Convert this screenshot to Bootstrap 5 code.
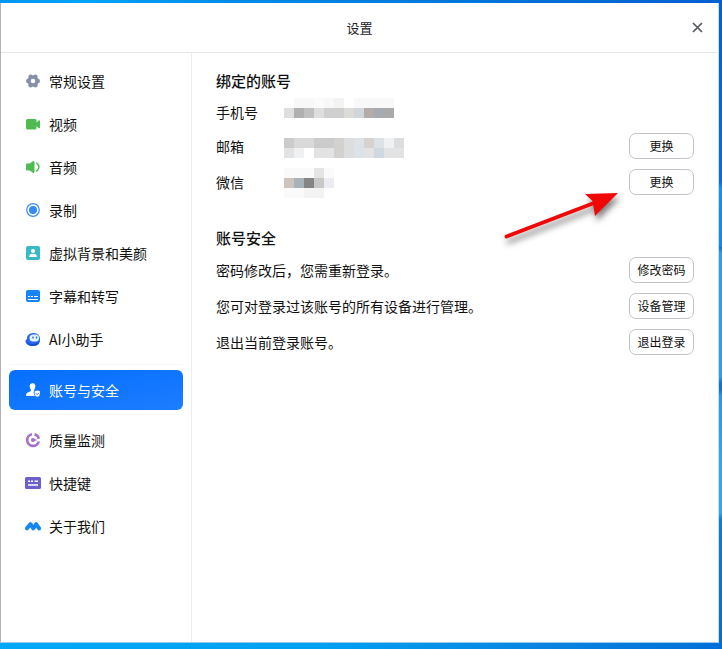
<!DOCTYPE html>
<html lang="zh-CN">
<head>
<meta charset="utf-8">
<meta name="viewport" content="width=device-width, initial-scale=1">
<title>设置</title>
<link href="https://cdn.jsdelivr.net/npm/bootstrap@5.3.0/dist/css/bootstrap.min.css" rel="stylesheet">
<style>
body {
  font-family: "Noto Sans CJK SC", sans-serif;
  font-size: 14px; line-height: 20px; color: #111;
  padding: 3px 3px 6px 0;
  background:
    linear-gradient(90deg, #0098f0 0, #00a4f6 12%, #008ee8 30%, #0078dc 60%, #0060cf 100%) top / 100% 3px no-repeat,
    linear-gradient(90deg, #00a8f8 0, #00a0f2 45%, #0a84e0 75%, #0070d8 100%) bottom / 100% 6px no-repeat,
    linear-gradient(180deg, #0360cf 0, #0a6ce0 28%, #1590f0 29%, #1488ea 38%, #0b6bcb 38%, #319fe8 39%, #319fe8 58%, #1173cd 59%, #1173cd 60%, #2a98e6 61%, #35a6ee 72%, #35a6ee 79%, #0f7dd0 80%, #0a6cc6 100%);
}
.window { border-left: 1px solid #b0b4b8; border-right: 1px solid #c4dff5; border-bottom: 1px solid #9cc8ea; }
.titlebar { height: 50px; border-bottom: 1px solid #e6e6e8; font-size: 13px; color: #222; }
.close-btn { position: absolute; right: 14px; top: 18px; line-height: 0; }
.sidebar { width: 191px; border-right: 1px solid #ededf0; padding: 6px 8px; }
.sidebar .nav-link { height: 43px; padding: 0 16px; color: #111; gap: 8px; font-size: 14px; border-radius: 6px; }
.sidebar .nav-link svg { width: 16px; height: 16px; flex: none; }
.sidebar .active-item { padding: 5px 0 4px; margin: 4px 0 3px; border-top: 1px solid #f8f8fa; border-bottom: 1px solid #f8f8fa; }
.sidebar .nav-link.active { height: 40px; color: #fff; background: linear-gradient(170deg, #066fff, #1c7dff); }
.pane { padding: 14px 24px 0; }
.pane h2 { font-size: 15px; font-weight: 500; line-height: 28px; margin: 0; }
.pane section + section { margin-top: 24px; }
.setting { height: 36px; }
.setting.compact { height: 33px; }
.setting dt { width: 68px; font-weight: 400; }
.setting dd, .setting p { margin: 0; }
.setting dd { line-height: 0; }
.setting .btn { width: 65px; height: 26px; padding: 0; font-size: 12px; line-height: 22px; border: 1px solid #bfc3cb; border-radius: 7px; color: #111; background: #fff; }
.pointer { position: absolute; right: 100px; top: 128px; pointer-events: none; filter: drop-shadow(2px 5px 3px rgba(0,0,0,.5)); }
</style>
<script src="https://cdn.jsdelivr.net/npm/bootstrap@5.3.0/dist/js/bootstrap.bundle.min.js"></script>
</head>
<body class="min-vh-100 d-flex flex-column">
<div class="window bg-white flex-grow-1 d-flex flex-column">
  <header class="titlebar position-relative d-flex align-items-center justify-content-center">
    <span>设置</span>
    <button type="button" class="close-btn btn p-0 border-0" aria-label="关闭">
      <svg width="13" height="13" viewBox="0 0 13 13" stroke="#55585c" stroke-width="1.7"><path d="M2 2l9 9M11 2l-9 9"/></svg>
    </button>
  </header>
  <div class="d-flex flex-grow-1">
    <nav class="sidebar flex-shrink-0" aria-label="设置分类">
      <ul class="nav flex-column">
        <li><a class="nav-link d-flex align-items-center" href="#general">
          <svg viewBox="0 0 16 16" fill="#8790ab"><circle cx="8" cy="8" r="4" fill="none" stroke="#8790ab" stroke-width="3.400"/><circle cx="12.800" cy="8" r="2.200"/><circle cx="3.200" cy="8" r="2.200"/><circle cx="10.400" cy="3.800" r="2.200"/><circle cx="5.600" cy="3.800" r="2.200"/><circle cx="10.400" cy="12.200" r="2.200"/><circle cx="5.600" cy="12.200" r="2.200"/></svg>
          常规设置</a></li>
        <li><a class="nav-link d-flex align-items-center" href="#video">
          <svg viewBox="0 0 16 16" fill="#50bb50"><rect x="1" y="3" width="10.500" height="10.500" rx="1.500"/><path d="M11 6.800L13.800 4.500Q15 3.800 15 5V11.500Q15 12.700 13.800 12L11 9.800Z"/></svg>
          视频</a></li>
        <li><a class="nav-link d-flex align-items-center" href="#audio">
          <svg viewBox="0 0 16 16" fill="#50bb50"><path d="M2 4.500H4.500L8 2.200Q9.500 1.500 9.500 3V13Q9.500 14.500 8 13.800L4.500 11.500H2Q1 11.500 1 10.500V5.500Q1 4.500 2 4.500Z"/><path d="M11.300 3.500Q16.500 8 11.300 12.500" fill="none" stroke="#50bb50" stroke-width="1.500"/></svg>
          音频</a></li>
        <li><a class="nav-link d-flex align-items-center" href="#record">
          <svg viewBox="0 0 16 16"><circle cx="8" cy="8" r="6.300" fill="none" stroke="#3d8bf2" stroke-width="1.200"/><circle cx="8" cy="8" r="4" fill="#338af3"/></svg>
          录制</a></li>
        <li><a class="nav-link d-flex align-items-center" href="#background">
          <svg viewBox="0 0 16 16"><rect x="1" y="1" width="14" height="14" rx="2" fill="#3bb8c6"/><g fill="#fff"><circle cx="8" cy="6" r="2.100"/><path d="M4 12Q4 8.800 8 8.800Q12 8.800 12 12Z"/></g></svg>
          虚拟背景和美颜</a></li>
        <li><a class="nav-link d-flex align-items-center" href="#captions">
          <svg viewBox="0 0 16 16"><rect x="1" y="2" width="14" height="12" rx="2" fill="#1684f5"/><path d="M3 8.500H5M6 8.500H8M9 8.500H13M3 11.500H13" stroke="#fff" stroke-width="1.200"/></svg>
          字幕和转写</a></li>
        <li><a class="nav-link d-flex align-items-center" href="#assistant">
          <svg viewBox="0 0 16 16"><path d="M2 6Q4 1.500 9 2Q14.500 2.500 15 7.500Q15.500 12 12 14Q7 16 3 14Q-.5 12 .8 9Q2.500 8.500 2 6Z" fill="#2b67ed"/><path d="M1 10Q3 13 8 13Q12 13 14.500 10Q14.500 15 8 15Q2 15 1 10Z" fill="#164fd2"/><rect x="4.500" y="3.500" width="9.500" height="7" rx="3.500" fill="#e4f4ff"/><path d="M8 5.500V7.500M11.500 5.500V7.500" stroke="#2461de" stroke-width="1.300"/></svg>
          AI小助手</a></li>
        <li class="active-item"><a class="nav-link active d-flex align-items-center" href="#account" aria-current="page">
          <svg viewBox="0 0 16 16" fill="#fff"><path d="M7.500 1.200C10.500 1.200 10.800 4 10 6C9.600 7 9.200 7.400 9.200 8.500Q8.700 9 8.700 10.500Q8.700 12.500 10 14H1.500Q.8 14 1 12.800Q1.300 10.800 4 10L6 9Q6 7.500 5.200 6.500C4.200 4 4.500 1.200 7.500 1.200Z"/><path d="M12.300 8.500L15 9.300V11.500Q15 13.800 12.300 15Q9.600 13.800 9.600 11.500V9.300Z"/><path d="M11 11.300L12.200 12.600L13.900 10.700" fill="none" stroke="#1678ff"/></svg>
          账号与安全</a></li>
        <li><a class="nav-link d-flex align-items-center" href="#quality">
          <svg viewBox="0 0 16 16" fill="none" stroke="#a56fc9" stroke-width="2.600"><path d="M7 2.200A5.900 5.900 0 1 0 13.800 9.500M9.500 2.300A5.900 5.900 0 0 1 13.800 6.800"/><circle cx="8" cy="8" r="2" fill="#a56fc9" stroke="none"/><path d="M8 8H11.500" stroke-width="1.300"/></svg>
          质量监测</a></li>
        <li><a class="nav-link d-flex align-items-center" href="#shortcuts">
          <svg viewBox="0 0 16 16"><rect y="2" width="16" height="12" rx="1.500" fill="#6b60cc"/><path d="M3 6.200H5M6 6.200H8M9.500 6.200H13M3 10H13" stroke="#fff" stroke-width="1.600"/></svg>
          快捷键</a></li>
        <li><a class="nav-link d-flex align-items-center" href="#about">
          <svg viewBox="0 0 16 16"><path d="M2 10.300L5.400 6.200L8.300 10.300L11.200 6.200L14.100 10.300" fill="none" stroke="#1687ee" stroke-width="4" stroke-linejoin="round" stroke-linecap="round"/></svg>
          关于我们</a></li>
      </ul>
    </nav>
    <main class="pane flex-grow-1 position-relative">
      <section>
        <h2>绑定的账号</h2>
        <dl class="m-0">
          <div class="setting compact d-flex align-items-center">
            <dt>手机号</dt>
            <dd><svg width="110" height="28" shape-rendering="crispEdges" aria-hidden="true">
              <path fill="#f8f8f8" d="M10 0h20v10h-20zM40 0h20v10h-20zM70 0h40v10h-40z"/><path fill="#fbfbfb" d="M30 0h10v10h-10z"/>
              <path fill="#f3f3f3" d="M50 0h10v10h-10z"/>
              <path fill="#dedede" d="M0 10h10v10H0zM30 10h10v10h-10z"/><path fill="#b0b0b0" d="M10 10h10v10h-10z"/><path fill="#c0c0c0" d="M20 10h10v10h-10z"/>
              <path fill="#cfcfcf" d="M40 10h20v10h-20z"/><path fill="#dcdbd7" d="M60 10h10v10h-10z"/><path fill="#d0d6da" d="M70 10h10v10h-10z"/>
              <path fill="#b3aca8" d="M80 10h10v10h-10z"/><path fill="#a5abb1" d="M90 10h10v10h-10z"/><path fill="#aaa" d="M100 10h10v10h-10z"/></svg></dd>
          </div>
          <div class="setting d-flex align-items-center">
            <dt>邮箱</dt>
            <dd><svg width="120" height="24" viewBox="0 -4 120 24" shape-rendering="crispEdges" aria-hidden="true">
              <path fill="#cbcbcb" d="M0 0h10v10H0zM30 0h20v10h-20z"/><path fill="#d9d9d9" d="M10 0h20v10h-20z"/><path fill="#d3d1ce" d="M50 0h10v10h-10zM50 10h10v10h-10z"/>
              <path fill="#dcdddf" d="M60 0h10v10h-10zM60 10h10v10h-10zM110 0h10v10h-10z"/><path fill="#dde2e7" d="M70 0h10v10h-10zM90 0h10v10h-10zM70 10h10v10h-10z"/>
              <path fill="#d8d2ce" d="M80 0h10v10h-10z"/><path fill="#f0f1f2" d="M100 0h10v10h-10zM10 10h10v10h-10z"/>
              <path fill="#e3e3e3" d="M0 10h10v10H0zM30 10h20v10h-20zM80 10h10v10h-10zM100 10h20v10h-20z"/><path fill="#cfd8df" d="M90 10h10v10h-10z"/></svg></dd>
            <dd class="ms-auto"><button type="button" class="btn">更换</button></dd>
          </div>
          <div class="setting d-flex align-items-center">
            <dt>微信</dt>
            <dd><svg width="50" height="32" viewBox="0 -2 50 32" shape-rendering="crispEdges" aria-hidden="true">
              <path fill="#fafafa" d="M0 0h30v10H0zM40 0h10v10h-10zM0 20h20v10H0z"/><path fill="#e4e4e4" d="M30 0h10v10h-10z"/>
              <path fill="#ccc4be" d="M0 10h10v10H0z"/><path fill="#a9b2b9" d="M10 10h10v10h-10z"/><path fill="#858585" d="M20 10h10v10h-10z"/><path fill="#c9c8c6" d="M30 10h10v10h-10z"/>
              <path fill="#ebedf2" d="M40 10h10v10h-10z"/><path fill="#f3f3f3" d="M20 20h20v10h-20z"/></svg></dd>
            <dd class="ms-auto"><button type="button" class="btn">更换</button></dd>
          </div>
        </dl>
      </section>
      <section>
        <h2>账号安全</h2>
        <div class="setting d-flex align-items-center justify-content-between"><p>密码修改后，您需重新登录。</p><button type="button" class="btn">修改密码</button></div>
        <div class="setting d-flex align-items-center justify-content-between"><p>您可对登录过该账号的所有设备进行管理。</p><button type="button" class="btn">设备管理</button></div>
        <div class="setting d-flex align-items-center justify-content-between"><p>退出当前登录账号。</p><button type="button" class="btn">退出登录</button></div>
      </section>
      <svg class="pointer" width="130" height="64" viewBox="0 0 130 64" aria-hidden="true">
        <path d="M18.500 55.500L106 22" stroke="#f00808" stroke-width="4" stroke-linecap="round"/>
        <path d="M130 12L97 13L104.500 20L107 35Z" fill="#f00808"/>
      </svg>
    </main>
  </div>
</div>
</body>
</html>
